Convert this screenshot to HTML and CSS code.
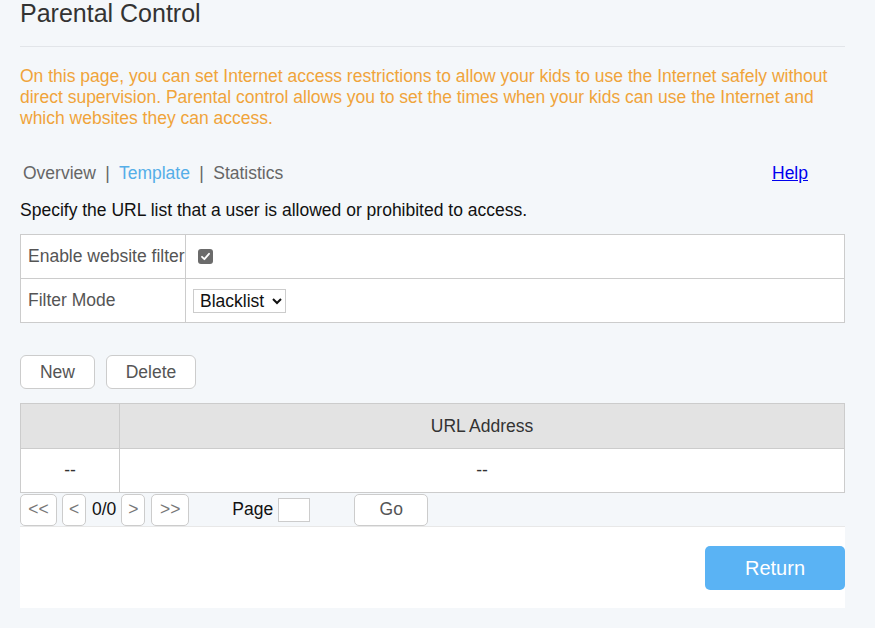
FILE: index.html
```html
<!DOCTYPE html>
<html lang="en">
<head>
  <meta charset="UTF-8">
  <meta name="viewport" content="width=device-width, initial-scale=1.0">
  <title>Parental Control</title>
  <link rel="stylesheet" href="styles.css">
</head>
<body>
  <div class="page">
    <h1>Parental Control</h1>
    <hr class="rule">
    <p class="intro">On this page, you can set Internet access restrictions to allow your kids to use the Internet safely without direct supervision. Parental control allows you to set the times when your kids can use the Internet and which websites they can access.</p>

    <div class="tabs">
      <div class="tab-links">
        <span class="tab">Overview</span>
        <span class="sep">|</span>
        <span class="tab active">Template</span>
        <span class="sep">|</span>
        <span class="tab">Statistics</span>
      </div>
      <a href="#" class="help">Help</a>
    </div>

    <p class="desc">Specify the URL list that a user is allowed or prohibited to access.</p>

    <table class="settings">
      <tr>
        <td class="label">Enable website filter</td>
        <td><span class="check"><svg width="11" height="11" viewBox="0 0 11 11"><path d="M2 5.8 L4.4 8.2 L9 2.8" fill="none" stroke="#fff" stroke-width="1.8" stroke-linecap="round" stroke-linejoin="round"/></svg></span></td>
      </tr>
      <tr>
        <td class="label">Filter Mode</td>
        <td>
          <select class="mode">
            <option>Blacklist</option>
            <option>Whitelist</option>
          </select>
        </td>
      </tr>
    </table>

    <div class="actions">
      <button class="btn btn-new">New</button>
      <button class="btn btn-delete">Delete</button>
    </div>

    <table class="urls">
      <tr>
        <th class="col-idx"></th>
        <th>URL Address</th>
      </tr>
      <tr>
        <td class="col-idx">--</td>
        <td>--</td>
      </tr>
    </table>

    <div class="pager">
      <button class="pg pg-wide">&lt;&lt;</button>
      <button class="pg">&lt;</button>
      <span class="count">0/0</span>
      <button class="pg">&gt;</button>
      <button class="pg pg-wide pg-last">&gt;&gt;</button>
      <span class="page-label">Page</span>
      <input type="text" class="page-input">
      <button class="pg pg-go">Go</button>
    </div>

    <div class="footer">
      <button class="return">Return</button>
    </div>
  </div>
</body>
</html>
```

FILE: styles.css
```css
body {
  margin: 0;
  background-color: #f4f7fa;
  font-family: "Liberation Sans", Arial, sans-serif;
  color: #333;
}
.page {
  width: 825px;
  padding-left: 20px;
}
h1 {
  margin: 0;
  font-size: 25px;
  font-weight: normal;
  line-height: 26px;
  color: #333;
}
.rule {
  margin: 20px 0 0;
  border: none;
  border-top: 1px solid #e2e5e9;
}
.intro {
  margin: 19px 0 0;
  font-size: 17.5px;
  line-height: 21px;
  color: #f0a43a;
}
.tabs {
  display: flex;
  justify-content: space-between;
  align-items: center;
  margin-top: 34px;
  padding-left: 3px;
  padding-right: 37px;
  font-size: 17.5px;
  line-height: 20px;
}
.tab {
  color: #666;
}
.tab.active {
  color: #55aee8;
}
.sep {
  color: #666;
  margin: 0 4.5px;
}
.help {
  color: #0000ee;
  text-decoration: underline;
}
.desc {
  margin: 17px 0 0;
  font-size: 17.5px;
  line-height: 20px;
  color: #111;
}
table {
  border-collapse: collapse;
  width: 100%;
  background-color: #fff;
  font-size: 17.5px;
}
.settings {
  margin-top: 14px;
  table-layout: fixed;
}
.settings td {
  border: 1px solid #ccc;
  height: 43px;
  padding: 0 7px;
  color: #555;
}
.settings td.label {
  width: 157px;
  padding: 0 0 0 7px;
  white-space: nowrap;
}
.check {
  display: inline-block;
  width: 15px;
  height: 15px;
  border-radius: 3px;
  background-color: #6b6b6b;
  vertical-align: middle;
  margin-left: 5px;
  margin-top: -2px;
}
.check svg {
  display: block;
  margin: 2px;
}
.mode {
  font-family: "Liberation Sans", Arial, sans-serif;
  font-size: 17.5px;
  color: #111;
  height: 24px;
  border: 1px solid #ccc;
  background-color: #fff;
  padding: 0 2px;
}
.actions {
  display: flex;
  gap: 11px;
  margin-top: 32px;
}
.btn {
  height: 34px;
  border: 1px solid #ccc;
  border-radius: 6px;
  background-color: #fff;
  color: #555;
  font-family: "Liberation Sans", Arial, sans-serif;
  font-size: 17.5px;
}
.btn-new {
  width: 75px;
}
.btn-delete {
  width: 90px;
}
.urls {
  margin-top: 14px;
}
.urls th,
.urls td {
  border: 1px solid #ccc;
  height: 44px;
  text-align: center;
  font-weight: normal;
  color: #333;
  padding: 0;
}
.urls td {
  height: 43px;
}
.urls th {
  background-color: #e3e3e3;
}
.urls .col-idx {
  width: 98px;
}
.pager {
  display: flex;
  align-items: center;
  height: 33px;
  font-size: 17.5px;
}
.pg {
  height: 32px;
  width: 24px;
  padding: 0;
  border: 1px solid #ccc;
  border-radius: 5px;
  background-color: #fff;
  color: #777;
  font-family: "Liberation Sans", Arial, sans-serif;
  font-size: 17.5px;
  margin-right: 5px;
}
.pg-wide {
  width: 37px;
}
.pg-last {
  margin-left: 1px;
  width: 38px;
}
.count {
  color: #111;
  margin: 0 5px 0 1px;
}
.page-label {
  color: #111;
  margin-left: 38px;
  margin-right: 5px;
}
.page-input {
  width: 32px;
  height: 24px;
  box-sizing: border-box;
  border: 1px solid #ccc;
  padding: 0;
}
.pg-go {
  width: 74px;
  margin-left: 44px;
  color: #555;
}
.footer {
  display: flex;
  justify-content: flex-end;
  background-color: #fff;
  border-top: 1px solid #e8e8e8;
  padding: 19px 0 18px;
}
.return {
  width: 140px;
  height: 44px;
  border: none;
  border-radius: 5px;
  background-color: #5ab3f4;
  color: #fff;
  font-family: "Liberation Sans", Arial, sans-serif;
  font-size: 20px;
}
```
